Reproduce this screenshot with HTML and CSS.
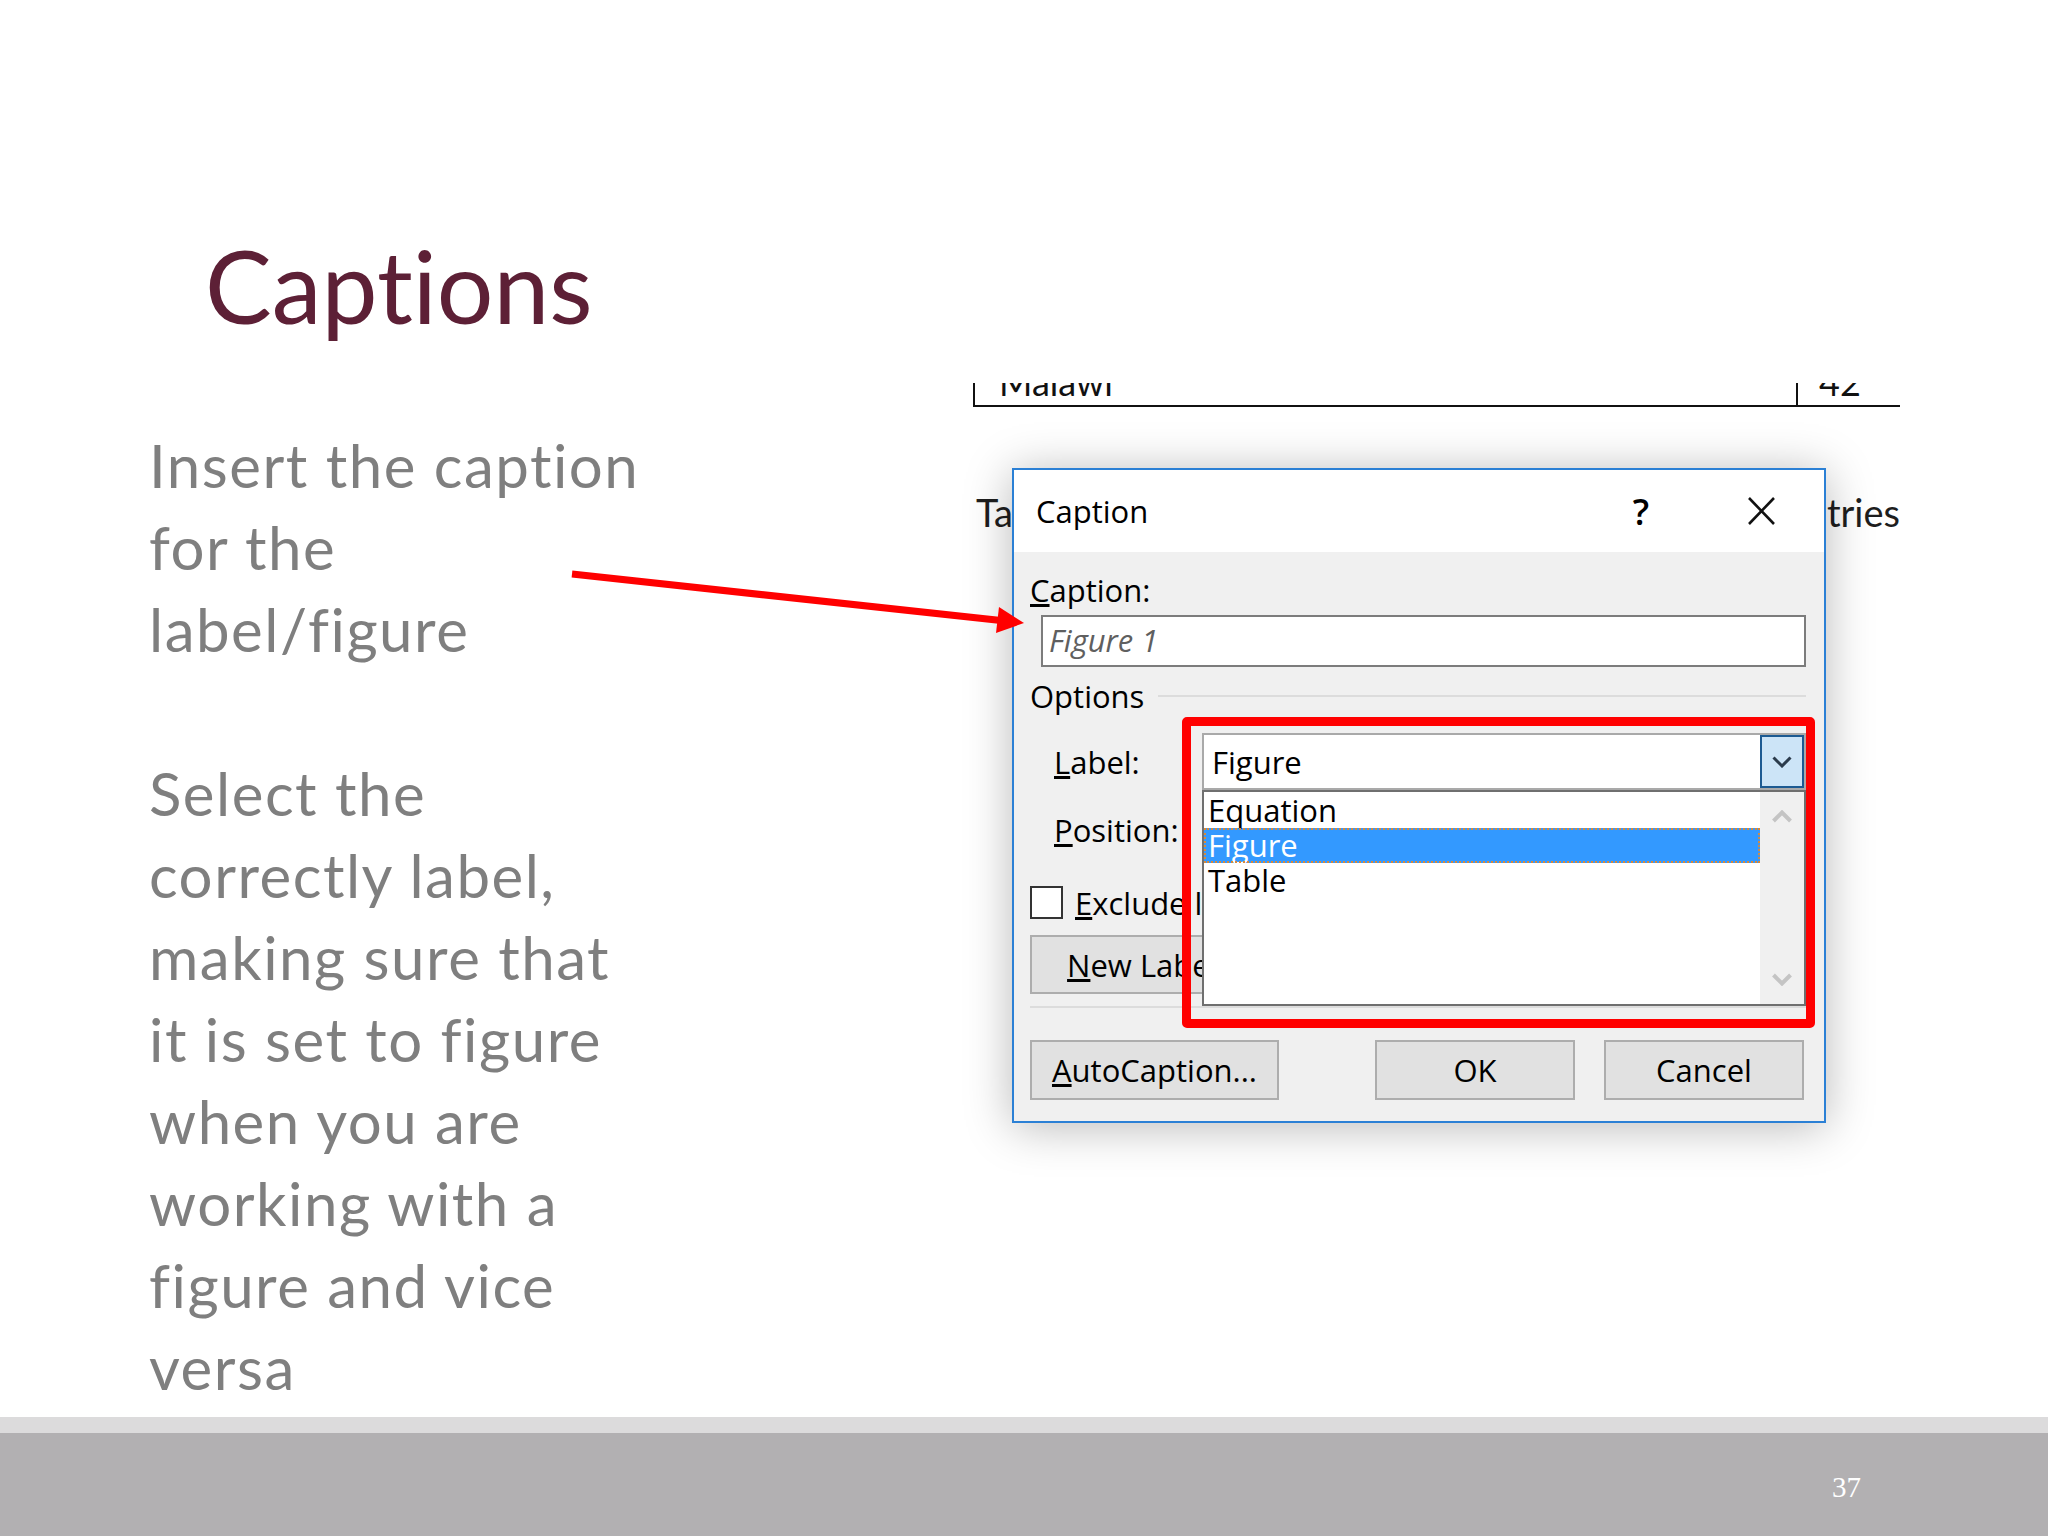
FILE: index.html
```html
<!DOCTYPE html>
<html lang="en">
<head>
<meta charset="utf-8">
<title>Captions</title>
<link rel="stylesheet" href="styles.css">
</head>
<body>
<div class="slide">
  <div class="content">
    <div class="text-col">
      <h1 class="title">Captions</h1>
      <div class="body">
        <p>Insert the caption<br>for the<br>label/figure</p>
        <p>Select the<br>correctly label,<br>making sure that<br>it is set to figure<br>when you are<br>working with a<br>figure and vice<br>versa</p>
      </div>
    </div>
    <div class="figure">
      <div class="doc-table">
        <div class="cell c1"><span>Malawi</span></div>
        <div class="cell c2"><span>42</span></div>
      </div>
      <div class="doc-caption"><span>Ta</span><span>tries</span></div>

      <div class="dialog">
        <div class="dlg-title">
          <span class="dlg-name">Caption</span>
          <span class="help">?</span>
          <svg class="close" width="27" height="28" viewBox="0 0 27 28"><path d="M1 1 L26 27 M26 1 L1 27" stroke="#111" stroke-width="2.6" fill="none"/></svg>
        </div>
        <div class="dlg-body">
          <div class="lbl-caption"><u>C</u>aption:</div>
          <div class="input">Figure 1</div>
          <div class="options"><span>Options</span><span class="opt-line"></span></div>
          <div class="row">
            <span class="row-lbl"><u>L</u>abel:</span>
            <div class="combo">
              <span class="combo-text">Figure</span>
              <span class="combo-btn"><svg width="20" height="12" viewBox="0 0 20 12"><path d="M1.5 1.5 L10 10 L18.5 1.5" stroke="#2b3b4c" stroke-width="3" fill="none"/></svg></span>
            </div>
          </div>
          <div class="row row-pos">
            <span class="row-lbl"><u>P</u>osition:</span>
          </div>
          <div class="row-check">
            <span class="checkbox"></span>
            <span class="check-text"><u>E</u>xclude label from caption</span>
          </div>
          <div class="btn btn-new"><span><u>N</u>ew Label...</span></div>
          <div class="sep"></div>
          <div class="buttons">
            <div class="btn btn-auto"><span><u>A</u>utoCaption...</span></div>
            <div class="btn btn-ok"><span>OK</span></div>
            <div class="btn btn-cancel"><span>Cancel</span></div>
          </div>
        </div>

        <div class="listbox">
          <div class="items">
            <div class="item">Equation</div>
            <div class="item selected">Figure</div>
            <div class="item">Table</div>
          </div>
          <div class="scroll">
            <svg width="20" height="13" viewBox="0 0 20 13"><path d="M1.5 11 L10 2.5 L18.5 11" stroke="#c4c4c4" stroke-width="4" fill="none"/></svg>
            <svg width="20" height="13" viewBox="0 0 20 13"><path d="M1.5 2 L10 10.5 L18.5 2" stroke="#c4c4c4" stroke-width="4" fill="none"/></svg>
          </div>
        </div>

        <div class="highlight-box"></div>
      </div>
    </div>
  </div>

  <svg class="arrow" width="480" height="90" viewBox="0 0 480 90">
    <line x1="12" y1="14" x2="441" y2="60.6" stroke="#ff0000" stroke-width="7"/>
    <polygon points="439,47 464,63 436,73" fill="#ff0000"/>
  </svg>

  <div class="footer"><span class="page-num">37</span></div>
</div>
</body>
</html>
```

FILE: styles.css
```css
html, body {
  margin: 0;
  padding: 0;
  background: #ffffff;
}

.slide {
  position: relative;
  width: 2048px;
  height: 1536px;
  overflow: hidden;
  background: #ffffff;
  font-variant-ligatures: none;
  font-feature-settings: "liga" 0, "clig" 0;
}

.content {
  display: flex;
  height: 1417px;
}

/* ---------- left text column ---------- */
.text-col {
  flex: none;
  width: 973px;
}

.title {
  margin: 0;
  padding: 225px 0 0 205px;
  font-family: "Lato", "Open Sans", sans-serif;
  font-weight: 400;
  font-size: 100px;
  line-height: 120px;
  color: #5d2036;
}

.body {
  margin-top: 79px;
  padding-left: 149px;
  font-family: "Lato", "Open Sans", sans-serif;
  font-size: 60px;
  line-height: 82px;
  letter-spacing: 1.5px;
  color: #7f7f7f;
  white-space: nowrap;
}

.body p {
  margin: 0;
}

.body p + p {
  margin-top: 82px;
}

/* ---------- pasted screenshot ---------- */
.figure {
  flex: none;
  position: relative;
  width: 927px;
  padding-top: 383px;
  font-family: "Open Sans", "Noto Sans", sans-serif;
}

.doc-table {
  display: flex;
  height: 22px;
  border-left: 2px solid #111;
  border-bottom: 2px solid #111;
}

.cell {
  display: flex;
  align-items: flex-end;
  overflow: hidden;
  box-sizing: border-box;
  height: 22px;
  padding-bottom: 5px;
  font-family: "Lato", sans-serif;
  font-size: 36px;
  line-height: 36px;
  color: #111;
}

.c1 {
  width: 821px;
  padding-left: 24px;
}

.c2 {
  flex: 1;
  border-left: 2px solid #111;
  padding-left: 21px;
}

.doc-caption {
  display: flex;
  justify-content: space-between;
  margin-top: 83px;
  padding-left: 3px;
  font-family: "Lato", sans-serif;
  font-size: 38px;
  line-height: 1.2;
  color: #1e1e1e;
}

/* ---------- dialog ---------- */
.dialog {
  position: absolute;
  left: 39px;
  top: 468px;
  width: 814px;
  height: 655px;
  box-sizing: border-box;
  border: 2px solid #2b80d5;
  background: #f0f0f0;
  box-shadow: 0 4px 44px rgba(0, 0, 0, 0.28);
  display: flex;
  flex-direction: column;
  font-size: 31px;
  color: #000;
}

.dlg-title {
  display: flex;
  align-items: center;
  height: 82px;
  padding-left: 22px;
  background: #ffffff;
}

.dlg-name {
  flex: 1;
}

.help {
  font-size: 36px;
  font-weight: 600;
  margin-right: 99px;
}

.close {
  margin-right: 49px;
}

.dlg-body {
  display: flex;
  flex-direction: column;
  padding: 18px 18px 21px 16px;
}

.lbl-caption {
  height: 40px;
  line-height: 40px;
}

.input {
  display: flex;
  align-items: center;
  height: 52px;
  box-sizing: border-box;
  margin-top: 5px;
  margin-left: 11px;
  padding: 0 0 3px 6px;
  border: 2px solid #7c7c7c;
  background: #fff;
  font-style: italic;
  color: #5f5f5f;
}

.options {
  display: flex;
  align-items: center;
  height: 40px;
  margin-top: 9px;
}

.opt-line {
  flex: 1;
  height: 2px;
  margin-left: 14px;
  background: #dcdcdc;
}

.row {
  display: flex;
  align-items: center;
  height: 57px;
  margin-top: 17px;
}

.row-pos {
  margin-top: 11px;
}

.row-lbl {
  flex: none;
  width: 148px;
  padding-left: 24px;
}

.combo {
  flex: 1;
  display: flex;
  align-items: center;
  height: 57px;
  box-sizing: border-box;
  border: 2px solid #a9a9a9;
  background: #fff;
}

.combo-text {
  flex: 1;
  padding-left: 8px;
}

.combo-btn {
  display: flex;
  align-items: center;
  justify-content: center;
  width: 44px;
  height: 53px;
  box-sizing: border-box;
  border: 2px solid #1c5a92;
  background: #cce4f7;
}

.row-check {
  display: flex;
  align-items: center;
  height: 33px;
  margin-top: 28px;
}

.checkbox {
  width: 33px;
  height: 33px;
  box-sizing: border-box;
  border: 2px solid #333;
  background: #fff;
}

.check-text {
  margin-left: 12px;
  white-space: nowrap;
}

.btn {
  display: flex;
  align-items: center;
  justify-content: center;
  height: 60px;
  box-sizing: border-box;
  border: 2px solid #adadad;
  background: #e1e1e1;
  white-space: nowrap;
}

.btn-new {
  width: 249px;
  height: 59px;
  margin-top: 16px;
}

.sep {
  height: 2px;
  margin-top: 12px;
  background: #dcdcdc;
}

.buttons {
  display: flex;
  margin-top: 32px;
}

.btn-auto {
  width: 249px;
}

.btn-ok {
  width: 200px;
  margin-left: 96px;
}

.btn-cancel {
  width: 200px;
  margin-left: 29px;
}

/* dropdown list overlay */
.listbox {
  position: absolute;
  left: 188px;
  top: 320px;
  width: 604px;
  height: 216px;
  box-sizing: border-box;
  border: 2px solid #6f6f6f;
  background: #fff;
  display: flex;
}

.items {
  flex: 1;
  padding-top: 1px;
}

.item {
  height: 35px;
  line-height: 35px;
  padding-left: 4px;
  box-sizing: border-box;
}

.item.selected {
  background: #3399ff;
  color: #fff;
  outline: 2px dotted #d9893a;
  outline-offset: -2px;
}

.scroll {
  width: 44px;
  display: flex;
  flex-direction: column;
  align-items: center;
  justify-content: space-between;
  padding: 18px 0;
  box-sizing: border-box;
  background: #f0f0f0;
}

/* red highlight rectangle */
.highlight-box {
  position: absolute;
  left: 168px;
  top: 247px;
  width: 633px;
  height: 311px;
  box-sizing: border-box;
  border: 9px solid #ff0000;
  border-radius: 5px;
}

/* red arrow */
.arrow {
  position: absolute;
  left: 560px;
  top: 560px;
}

/* ---------- footer ---------- */
.footer {
  display: flex;
  justify-content: flex-end;
  align-items: center;
  height: 119px;
  box-sizing: border-box;
  border-top: 16px solid #dcdbdc;
  padding: 6px 187px 0 0;
  background: #b2b0b2;
}

.page-num {
  font-family: "Liberation Serif", serif;
  font-size: 29px;
  color: #ffffff;
}
```
